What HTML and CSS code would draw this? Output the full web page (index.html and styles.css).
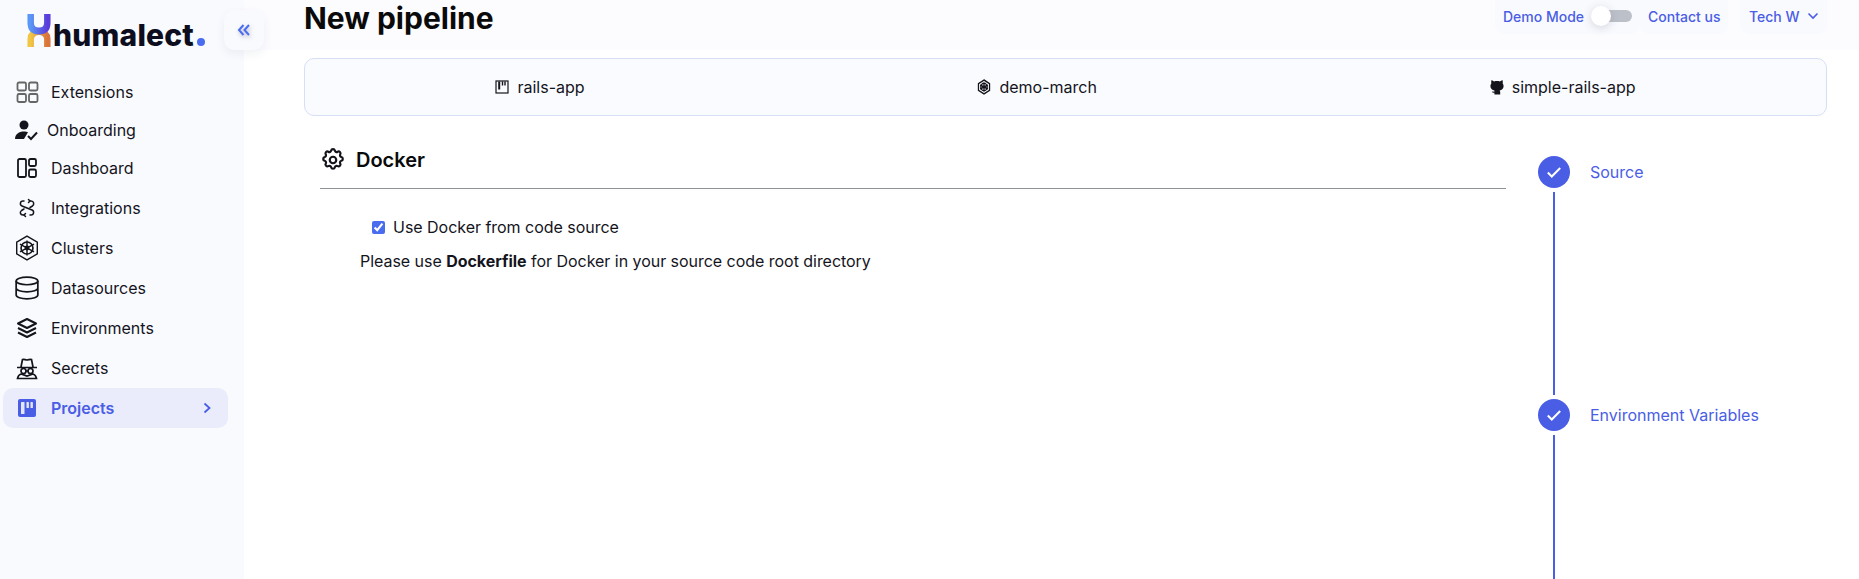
FILE: index.html
```html
<!DOCTYPE html>
<html lang="en">
<head>
<meta charset="utf-8">
<title>New pipeline</title>
<link rel="stylesheet" href="styles.css">
</head>
<body>
<div class="app">
  <aside class="sidebar">
    <div class="brand">
      <svg class="brand-mark" viewBox="0 0 26 34" width="24" height="33" preserveAspectRatio="none">
        <defs>
          <linearGradient id="gt" x1="0" y1="0" x2="1" y2="0"><stop offset="0" stop-color="#5a96f5"/><stop offset="1" stop-color="#5b3ddb"/></linearGradient>
          <linearGradient id="gb" x1="0" y1="0" x2="1" y2="0"><stop offset="0" stop-color="#f0c644"/><stop offset="1" stop-color="#d9743c"/></linearGradient>
        </defs>
        <path d="M4 34V26Q4 19 13 18Q22 19 22 26V34" fill="none" stroke="url(#gb)" stroke-width="7"/>
        <path d="M4 0V9Q4 17.500 13 17.500Q22 17.500 22 9V0" fill="none" stroke="url(#gt)" stroke-width="7"/>
      </svg>
      <span class="brand-name">humalect<span class="brand-dot">.</span></span>
    </div>
    <button class="collapse" type="button" aria-label="Collapse">
      <svg viewBox="0 0 14 14" width="14" height="14" fill="none" stroke="#4a6df0" stroke-width="2"><path d="M6.500 2 2 7l4.500 5M12 2 7.500 7l4.500 5"/></svg>
    </button>
    <nav class="nav">
      <a class="nav-item">
        <svg class="ico" viewBox="0 0 24 24" fill="none" stroke="#666" stroke-width="1.800"><rect x="2.500" y="2.500" width="8.500" height="8" rx="1.500"/><rect x="14" y="2.500" width="8.500" height="8" rx="1.500"/><rect x="2.500" y="14" width="8.500" height="8" rx="1.500"/><rect x="14" y="14" width="8.500" height="8" rx="1.500"/></svg>
        <span>Extensions</span>
      </a>
      <a class="nav-item nav-item-tight">
        <svg class="ico" viewBox="0 0 24 24" fill="#14141c"><circle cx="10" cy="7" r="4.500"/><path d="M1 21c0-5 4-7.500 9-7.500 1.500 0 3 .3 4 .8L10 21H1z"/><path d="m14 18 3 3 6-6.500" fill="none" stroke="#14141c" stroke-width="2"/></svg>
        <span>Onboarding</span>
      </a>
      <a class="nav-item">
        <svg class="ico" viewBox="0 0 24 24" fill="none" stroke="#14141c" stroke-width="1.800"><rect x="3" y="3" width="8" height="18" rx="1.500"/><rect x="14" y="3" width="7" height="7" rx="1.500"/><rect x="14" y="13.500" width="7" height="7.500" rx="1.500"/></svg>
        <span>Dashboard</span>
      </a>
      <a class="nav-item">
        <svg class="ico" viewBox="0 0 24 24" fill="none" stroke="#14141c" stroke-width="1.500" stroke-linecap="round" stroke-linejoin="round"><path d="M9 5H8C5 5 4.500 9 7 10l10 4c2.500 1 2 5-1 5h-1"/><path d="M15 5h1c3 0 3.500 3.500 1.500 5L15 11.500M9 13l-2.500 1.500C4.500 16 5 19 8 19h1"/><path d="M13.500 3.500 15 5l-1.500 1.500M10.500 17.500 9 19l1.500 1.500"/></svg>
        <span>Integrations</span>
      </a>
      <a class="nav-item">
        <svg class="ico ico-lg" viewBox="0 0 24 24" fill="none" stroke="#14141c" stroke-width="1.300"><path d="M12 1 21.500 6.500v11L12 23l-9.500-5.500v-11z"/><circle cx="12" cy="12" r="5.500" stroke-width="1.500"/><path d="M12 5v14M5.500 8.500l13 7M18.500 8.500l-13 7" stroke-width="1.300"/><circle cx="12" cy="12" r="1.600" fill="#14141c"/></svg>
        <span>Clusters</span>
      </a>
      <a class="nav-item">
        <svg class="ico ico-lg" viewBox="0 0 24 24" fill="none" stroke="#14141c" stroke-width="1.600"><ellipse cx="12" cy="5.500" rx="10" ry="3.500"/><path d="M2 5.500v13C2 20.500 6.500 22 12 22s10-1.500 10-3.500v-13M2 12c0 2 4.500 3.500 10 3.500s10-1.500 10-3.500"/></svg>
        <span>Datasources</span>
      </a>
      <a class="nav-item">
        <svg class="ico" viewBox="0 0 24 24" fill="none" stroke="#14141c" stroke-width="2" stroke-linejoin="round"><path d="m12 3 9 4.500-9 4.500-9-4.500z"/><path d="m3 12 9 4.500 9-4.500M3 16.500 12 21l9-4.500"/></svg>
        <span>Environments</span>
      </a>
      <a class="nav-item">
        <svg class="ico" viewBox="0 0 24 24" fill="none" stroke="#14141c" stroke-width="1.700"><path d="M2 11.500h20M6 11l1.500-7.500c1.500-.5 3 .5 4.500.5s3-1 4.500-.5L18 11"/><circle cx="8.500" cy="15" r="2.500"/><circle cx="15.500" cy="15" r="2.500"/><path d="M11 15h2M2.500 22.500c.5-2.500 1.500-4 3.500-4.500l6 2 6-2c2 .5 3 2 3.500 4.500z"/></svg>
        <span>Secrets</span>
      </a>
      <a class="nav-item nav-item-active">
        <svg class="ico" viewBox="0 0 24 24"><rect x="3" y="3" width="18" height="18" rx="2" fill="#4a5de5"/><rect x="6" y="6" width="3.500" height="12" rx=".6" fill="#fff" opacity=".85"/><rect x="11.500" y="6" width="2.400" height="6" rx=".6" fill="#fff" opacity=".85"/><rect x="15.500" y="6" width="2.400" height="6" rx=".6" fill="#fff" opacity=".85"/></svg>
        <span class="nav-label">Projects</span>
        <svg class="nav-arrow" viewBox="0 0 10 14" width="10" height="14" fill="none" stroke="#4a5de5" stroke-width="1.800"><path d="m2.500 2.500 5 4.500-5 4.500"/></svg>
      </a>
    </nav>
  </aside>

  <main class="main">
    <header class="topbar">
      <h1 class="title">New pipeline</h1>
      <div class="actions">
        <div class="chip chip-demo">
          <span>Demo Mode</span>
          <span class="toggle"><span class="knob"></span></span>
        </div>
        <div class="chip chip-contact">Contact us</div>
        <div class="chip chip-user">
          <span>Tech W</span>
          <svg viewBox="0 0 12 8" width="12" height="8" fill="none" stroke="#4a5de5" stroke-width="1.600"><path d="m1.500 1.500 4.500 4.500 4.500-4.500"/></svg>
        </div>
      </div>
    </header>

    <section class="tabs">
      <div class="tab">
        <svg viewBox="0 0 14 14" width="14" height="14" fill="none" stroke="#14141c" stroke-width="1.200"><rect x="1" y="1" width="12" height="12"/><path d="M4.200 1.500v8" stroke-width="2"/><path d="M7.500 1.500v4M10 1.500v4" stroke-width="1.400"/></svg>
        <span>rails-app</span>
      </div>
      <div class="tab">
        <svg viewBox="0 0 24 24" width="14" height="16" preserveAspectRatio="none" fill="none" stroke="#14141c" stroke-width="2.200"><path d="M12 1.500 21.500 7v10L12 22.500 2.500 17V7z"/><circle cx="12" cy="12" r="5.500"/><path d="M12 5.500v13M5.500 9l13 6M18.500 9l-13 6"/></svg>
        <span>demo-march</span>
      </div>
      <div class="tab">
        <svg viewBox="0 0 14 16" width="14" height="16" fill="#14141c"><path d="M1.500 1 4.200 2.400C5.500 2 8.500 2 9.800 2.400L12.500 1c.4 1.300.4 2.600.2 3.600.6.700.9 1.600.9 2.500 0 2.800-1.700 4-4 4.300.4.400.6 1 .6 1.600V15.500H4.400V13.800c-1 .2-2 0-2.600-1.300l2.600.3v-1.400C2.100 11.100.4 9.900.4 7.100c0-.9.300-1.800.9-2.500C1.100 3.600 1.100 2.300 1.500 1z"/></svg>
        <span>simple-rails-app</span>
      </div>
    </section>

    <div class="body">
      <section class="form">
        <div class="form-head">
          <svg viewBox="0 0 24 24" width="26" height="26" fill="none" stroke="#14141c" stroke-width="2" stroke-linejoin="round"><path d="M10.300 3.300c.4-1.700 3-1.700 3.400 0a1.700 1.700 0 0 0 2.600 1.100c1.500-.9 3.300.8 2.400 2.400a1.700 1.700 0 0 0 1 2.500c1.800.5 1.800 3 0 3.400a1.700 1.700 0 0 0-1 2.600c.9 1.500-.9 3.300-2.400 2.400a1.700 1.700 0 0 0-2.600 1c-.4 1.800-3 1.800-3.400 0a1.700 1.700 0 0 0-2.600-1c-1.500.9-3.300-.9-2.400-2.400a1.700 1.700 0 0 0-1-2.600c-1.800-.4-1.800-3 0-3.400a1.700 1.700 0 0 0 1-2.500c-.9-1.600.9-3.300 2.400-2.400a1.700 1.700 0 0 0 2.600-1.100z"/><circle cx="12" cy="12" r="3"/></svg>
          <h2>Docker</h2>
        </div>
        <label class="check">
          <input type="checkbox" checked>
          <span>Use Docker from code source</span>
        </label>
        <p class="hint">Please use <b>Dockerfile</b> for Docker in your source code root directory</p>
      </section>

      <aside class="stepper">
        <div class="step">
          <span class="dot"><svg viewBox="0 0 16 16" width="18" height="18" fill="none" stroke="#fff" stroke-width="1.800"><path d="m2.500 8.500 3.500 3.500 7.500-7.500"/></svg></span>
          <span class="step-label">Source</span>
        </div>
        <div class="rail"></div>
        <div class="step">
          <span class="dot"><svg viewBox="0 0 16 16" width="18" height="18" fill="none" stroke="#fff" stroke-width="1.800"><path d="m2.500 8.500 3.500 3.500 7.500-7.500"/></svg></span>
          <span class="step-label">Environment Variables</span>
        </div>
        <div class="rail"></div>
      </aside>
    </div>
  </main>
</div>
</body>
</html>
```

FILE: styles.css
```css
* { box-sizing: border-box; }
html, body { margin: 0; height: 100%; overflow: hidden; background: #fff; }
body { font-family: Inter, "Noto Sans", sans-serif; color: #14141c; font-size: 16px; }
.app { display: flex; height: 579px; overflow: hidden; }

.sidebar { position: relative; width: 244px; flex: none; background: #f9fafe; padding-left: 3px; }
.brand { display: flex; align-items: flex-end; height: 72px; padding: 0 0 22px 24px; }
.brand-mark { display: block; flex: none; margin-bottom: 3px; }
.brand-name { font-size: 30px; font-weight: 800; line-height: 30px; letter-spacing: .2px; margin-left: 2px; color: #0d0d20; white-space: nowrap; }
.brand-dot { display: inline-block; width: 8px; height: 8px; margin-left: 3px; border-radius: 50%; background: #4a6df0; color: transparent; font-size: 8px; line-height: 8px; overflow: hidden; }
.collapse { position: absolute; left: 224px; top: 10px; width: 40px; height: 40px; display: flex; align-items: center; justify-content: center; padding: 0; border: 0; border-radius: 10px; background: #f9fafe; box-shadow: 0 4px 10px rgba(60, 70, 110, .07); z-index: 2; }
.collapse svg { filter: drop-shadow(1px 2px 2px rgba(40, 40, 60, .3)); }

.nav { display: flex; flex-direction: column; width: 225px; }
.nav-item { display: flex; align-items: center; gap: 12px; height: 40px; padding-left: 12px; border-radius: 10px; color: #14141c; }
.nav-item-tight { height: 36px; gap: 9px; padding-left: 11px; }
.nav-item-active { background: #eaecfb; color: #4a5de5; font-weight: 600; }
.nav-label { flex: 1; }
.nav-arrow { margin-right: 16px; }
.ico { width: 24px; height: 24px; flex: none; }
.ico-lg { width: 26px; height: 26px; margin: 0 -1px; }

.main { flex: 1; min-width: 0; display: flex; flex-direction: column; }
.topbar { display: flex; align-items: flex-start; justify-content: space-between; height: 50px; margin-bottom: 8px; padding: 0 32px 0 60px; background: #fcfcff; flex: none; }
.title { margin: 0; font-size: 30px; font-weight: 700; line-height: 36px; color: #0a0a0a; }
.actions { display: flex; align-items: flex-start; color: #4a5de5; font-size: 14px; font-weight: 500; }
.chip { display: flex; align-items: center; height: 34px; padding-bottom: 2px; background: #f9fafe; border-radius: 0 0 10px 10px; white-space: nowrap; flex: none; }
.chip-demo { gap: 7px; padding-left: 8px; padding-right: 8px; width: 145px; }
.chip-contact { padding-left: 8px; padding-right: 8px; width: 88px; }
.chip-user { gap: 7px; margin-left: 12px; padding-left: 9px; width: 87px; }
.chip-user svg { flex: none; }
.toggle { position: relative; display: block; width: 32px; height: 12px; border-radius: 6px; background: #bcc0c8; margin-left: 9px; flex: none; }
.knob { position: absolute; left: -9px; top: -4px; width: 20px; height: 20px; border-radius: 50%; background: #fff; box-shadow: 0 2px 10px rgba(70, 70, 90, .2); }

.tabs { display: flex; justify-content: space-around; gap: 12px; align-items: center; height: 58px; margin: 0 32px 0 60px; flex: none; background: #fafbff; border: 1px solid #d6dff5; border-radius: 10px; }
.tab { display: flex; align-items: center; gap: 8px; }

.body { display: flex; flex: 1; min-height: 0; padding-left: 76px; overflow: hidden; }
.form { width: 1186px; flex: none; }
.form-head { display: flex; align-items: center; gap: 10px; height: 73px; padding: 16px 0 0 0; border-bottom: 1px solid #8f9299; }
.form-head h2 { margin: 0; font-size: 20px; font-weight: 600; line-height: 24px; color: #0a0a0a; }
.check { display: flex; align-items: center; gap: 8px; margin: 28px 0 0 52px; height: 20px; letter-spacing: -.03px; }
.check input { width: 13px; height: 13px; margin: 0; accent-color: #4a6df0; flex: none; }
.hint { margin: 14px 0 0 40px; line-height: 20px; letter-spacing: -.035px; }

.stepper { display: flex; flex-direction: column; padding: 40px 0 0 32px; }
.step { display: flex; align-items: center; gap: 20px; height: 32px; flex: none; }
.dot { display: flex; align-items: center; justify-content: center; width: 32px; height: 32px; border-radius: 50%; background: #4a5de5; flex: none; }
.step-label { color: #4a5de5; white-space: nowrap; }
.rail { width: 2px; height: 203px; margin: 4px 0 4px 15px; background: #4a5de5; flex: none; }
```
